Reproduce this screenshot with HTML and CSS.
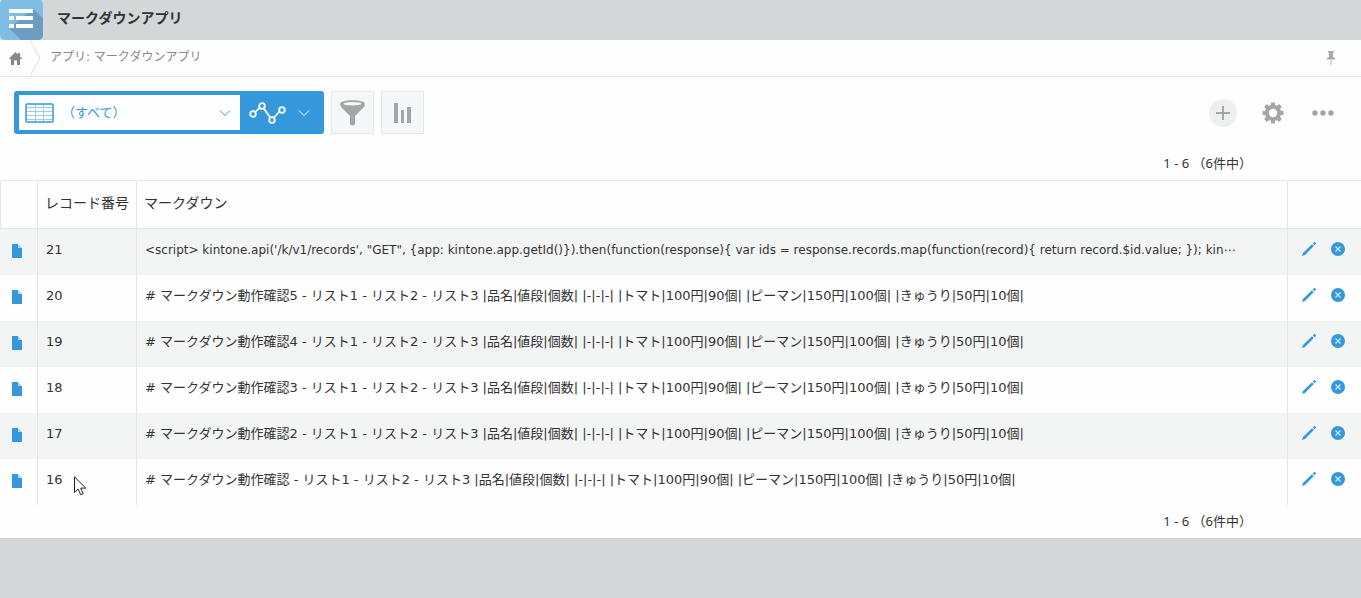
FILE: index.html
```html
<!DOCTYPE html>
<html lang="ja">
<head>
    <meta charset="UTF-8">
    <title>マークダウンアプリ</title>
    <link rel="stylesheet" href="styles.css">
</head>
<body>
    <svg class="symbols" width="0" height="0">
        <symbol id="file" viewBox="0 0 10 14">
            <path fill="#3498db" d="M0 0h6v4h4v10H0z"/>
            <path fill="#a4d1ef" d="M6 0l4 4H7L6 3z"/>
        </symbol>
        <symbol id="pencil" viewBox="0 0 14 14">
            <path fill="#3498db" d="M0 14l1-3L10 2.200l1.800 1.800L3 13z"/>
            <path fill="#3498db" d="M10.800 1.400L12.200 0h.6L14 1.200v.6l-1.400 1.400z"/>
        </symbol>
        <symbol id="remove" viewBox="0 0 14 14">
            <circle cx="7" cy="7" r="7" fill="#3498db"/>
            <path d="M4.500 4.500l5 5M9.500 4.500l-5 5" stroke="#d6eaf8" stroke-width="1.200"/>
        </symbol>
        <symbol id="chevron" viewBox="0 0 12 8">
            <path d="M1 1.500l5 5 5-5" fill="none" stroke="currentColor"/>
        </symbol>
    </svg>

    <div class="header">
        <svg class="app-icon" width="43" height="40" viewBox="0 0 43 40">
            <path fill="#7fbde4" d="M2 0h39q2 2 2 5v29q0 6-6 6H6q-6 0-6-6V3q1-2 2-3z"/>
            <path fill="#6c9dc0" d="M33 9l10 9v16q0 6-6 6H21L9 28z"/>
            <path fill="#fff" d="M9 9h24v4H9zM9 16h5v4H9zM16 16h17v4H16zM9 24h5v4H9zM16 24h17v4H16z"/>
        </svg>
        <h1>マークダウンアプリ</h1>
    </div>

    <div class="content">
        <div class="breadcrumb">
            <a class="home" href="#" aria-label="ホーム">
                <svg width="13" height="13" viewBox="0 0 13 13">
                    <path fill="#8d8688" d="M6.500 0L9 2.500V1h2v3.500L13 6.500l-.8 1L11 6.500V13H8V8.500H5V13H2V6.500L.8 7.500 0 6.500z"/>
                </svg>
            </a>
            <svg class="divider" width="12" height="36" viewBox="0 0 12 36">
                <path d="M0 0l10 18L0 36" fill="none" stroke="#dde1e2"/>
            </svg>
            <a class="crumb" href="#">アプリ: マークダウンアプリ</a>
            <button class="pin" aria-label="固定">
                <svg width="8" height="14" viewBox="0 0 8 14">
                    <path fill="#aaa" d="M1 0h6v1.500H6V6l2 1v1.500H0V7l2-1V1.500H1z"/>
                    <path fill="#b3bfc6" d="M3.500 8.500h1V14h-1z"/>
                </svg>
            </button>
        </div>

        <div class="toolbar">
            <div class="view-group">
                <div class="view-select">
                    <svg width="29" height="20" viewBox="0 0 29 20">
                        <path d="M1 4.500h27M1 8.500h27M1 12.500h27M1 16.500h27M10.500 1v18M18.500 1v18" stroke="#9accec"/>
                        <rect x="1" y="1" width="27" height="18" rx="1" fill="none" stroke="#3498db" stroke-width="1.500"/>
                    </svg>
                    <select aria-label="一覧">
                        <option>（すべて）</option>
                    </select>
                    <svg class="arrow" width="12" height="8"><use href="#chevron"/></svg>
                </div>
                <button class="graph-button" aria-label="グラフ">
                    <svg width="37" height="22" viewBox="0 0 37 22" fill="none" stroke="#fff" stroke-width="1.800">
                        <path d="M6 10.200l5-4.500M14.500 6l7 10M24.500 16l6.500-7"/>
                        <circle cx="4" cy="12" r="2.800"/>
                        <circle cx="13" cy="4" r="2.800"/>
                        <circle cx="23" cy="18" r="2.800"/>
                        <circle cx="33" cy="8" r="2.800"/>
                    </svg>
                    <svg width="12" height="8"><use href="#chevron"/></svg>
                </button>
            </div>
            <button class="tool-button" aria-label="絞り込む">
                <svg width="25" height="26" viewBox="0 0 25 26">
                    <path fill="#a5a5a5" d="M0 4C0-1 25-1 25 4c0 2-1 3-2.500 4.500L15 16v8.500q-2.500 2-5 0V16L2.500 8.500Q0 6 0 4z"/>
                    <ellipse cx="12.500" cy="3.800" rx="9" ry="1.700" fill="#f5f8f9"/>
                </svg>
            </button>
            <button class="tool-button" aria-label="集計する">
                <svg width="17" height="20" viewBox="0 0 17 20">
                    <path fill="#a5a5a5" d="M0 0h4v20H0zM7 7h3v13H7zM13 4h4v16h-4z"/>
                </svg>
            </button>
            <div class="actions">
                <button class="add-button" aria-label="追加">
                    <svg width="14" height="14" viewBox="0 0 14 14">
                        <path d="M7 0v14M0 7h14" stroke="#a5a5a5" stroke-width="2"/>
                    </svg>
                </button>
                <button aria-label="設定">
                    <svg width="22" height="22" viewBox="-11 -11 22 22">
                        <path stroke="#a5a5a5" stroke-width="4" d="M0-10.500v5M0 10.500v-5M-10.500 0h5M10.500 0h-5M-7.500-7.500l3 3M7.500 7.500l-3-3M-7.500 7.500l3-3M7.500-7.500l-3 3"/>
                        <circle r="6.200" fill="none" stroke="#a5a5a5" stroke-width="4"/>
                    </svg>
                </button>
                <button aria-label="その他">
                    <svg width="22" height="6" viewBox="0 0 22 6" fill="#a5a5a5">
                        <circle cx="3" cy="3" r="2.700"/>
                        <circle cx="11" cy="3" r="2.700"/>
                        <circle cx="19" cy="3" r="2.700"/>
                    </svg>
                </button>
            </div>
        </div>

        <div class="pager pager-top">1 - 6 （6件中）</div>

        <table class="records">
            <thead>
                <tr>
                    <th class="col-file"></th>
                    <th class="col-number">レコード番号</th>
                    <th>マークダウン</th>
                    <th class="col-action"></th>
                </tr>
            </thead>
            <tbody>
                <tr>
                    <td class="file"><a href="#" aria-label="詳細"><svg width="10" height="14"><use href="#file"/></svg></a></td>
                    <td>21</td>
                    <td class="text script">&lt;script&gt; kintone.api('/k/v1/records', "GET", {app: kintone.app.getId()}).then(function(response){ var ids = response.records.map(function(record){ return record.$id.value; }); kin⋯</td>
                    <td class="action"><div class="buttons"><button aria-label="編集"><svg width="14" height="14"><use href="#pencil"/></svg></button><button aria-label="削除"><svg width="14" height="14"><use href="#remove"/></svg></button></div></td>
                </tr>
                <tr>
                    <td class="file"><a href="#" aria-label="詳細"><svg width="10" height="14"><use href="#file"/></svg></a></td>
                    <td>20</td>
                    <td class="text"># マークダウン動作確認5 - リスト1 - リスト2 - リスト3 |品名|値段|個数| |-|-|-| |トマト|100円|90個| |ピーマン|150円|100個| |きゅうり|50円|10個|</td>
                    <td class="action"><div class="buttons"><button aria-label="編集"><svg width="14" height="14"><use href="#pencil"/></svg></button><button aria-label="削除"><svg width="14" height="14"><use href="#remove"/></svg></button></div></td>
                </tr>
                <tr>
                    <td class="file"><a href="#" aria-label="詳細"><svg width="10" height="14"><use href="#file"/></svg></a></td>
                    <td>19</td>
                    <td class="text"># マークダウン動作確認4 - リスト1 - リスト2 - リスト3 |品名|値段|個数| |-|-|-| |トマト|100円|90個| |ピーマン|150円|100個| |きゅうり|50円|10個|</td>
                    <td class="action"><div class="buttons"><button aria-label="編集"><svg width="14" height="14"><use href="#pencil"/></svg></button><button aria-label="削除"><svg width="14" height="14"><use href="#remove"/></svg></button></div></td>
                </tr>
                <tr>
                    <td class="file"><a href="#" aria-label="詳細"><svg width="10" height="14"><use href="#file"/></svg></a></td>
                    <td>18</td>
                    <td class="text"># マークダウン動作確認3 - リスト1 - リスト2 - リスト3 |品名|値段|個数| |-|-|-| |トマト|100円|90個| |ピーマン|150円|100個| |きゅうり|50円|10個|</td>
                    <td class="action"><div class="buttons"><button aria-label="編集"><svg width="14" height="14"><use href="#pencil"/></svg></button><button aria-label="削除"><svg width="14" height="14"><use href="#remove"/></svg></button></div></td>
                </tr>
                <tr>
                    <td class="file"><a href="#" aria-label="詳細"><svg width="10" height="14"><use href="#file"/></svg></a></td>
                    <td>17</td>
                    <td class="text"># マークダウン動作確認2 - リスト1 - リスト2 - リスト3 |品名|値段|個数| |-|-|-| |トマト|100円|90個| |ピーマン|150円|100個| |きゅうり|50円|10個|</td>
                    <td class="action"><div class="buttons"><button aria-label="編集"><svg width="14" height="14"><use href="#pencil"/></svg></button><button aria-label="削除"><svg width="14" height="14"><use href="#remove"/></svg></button></div></td>
                </tr>
                <tr>
                    <td class="file"><a href="#" aria-label="詳細"><svg width="10" height="14"><use href="#file"/></svg></a></td>
                    <td>16</td>
                    <td class="text"># マークダウン動作確認 - リスト1 - リスト2 - リスト3 |品名|値段|個数| |-|-|-| |トマト|100円|90個| |ピーマン|150円|100個| |きゅうり|50円|10個|</td>
                    <td class="action"><div class="buttons"><button aria-label="編集"><svg width="14" height="14"><use href="#pencil"/></svg></button><button aria-label="削除"><svg width="14" height="14"><use href="#remove"/></svg></button></div></td>
                </tr>
            </tbody>
        </table>

        <div class="pager">1 - 6 （6件中）</div>
    </div>

    <svg class="cursor" width="13" height="20" viewBox="0 0 13 20">
        <path d="M.5.8v15.700l3.700-3.500 2.500 5.700 2.500-1.100-2.500-5.500h5z" fill="#fff" stroke="#223"/>
    </svg>
</body>
</html>
```

FILE: styles.css
```css
* {
    box-sizing: border-box;
}
body {
    margin: 0;
    background-color: #d3d7d7;
    color: #333;
    font-family: "DejaVu Sans", "Noto Sans CJK JP", sans-serif;
    font-size: 13px;
    line-height: 20px;
}
svg {
    display: block;
    flex: none;
}
button {
    display: flex;
    align-items: center;
    justify-content: center;
    margin: 0;
    padding: 0;
    border: none;
    background: none;
    cursor: pointer;
}
.symbols {
    position: absolute;
}
.header {
    display: flex;
    height: 40px;
}
.header h1 {
    margin: 0;
    padding: 8px 14px;
    font-size: 14px;
    font-weight: bold;
}
.content {
    background-color: #fefefe;
}
.breadcrumb {
    display: flex;
    align-items: center;
    height: 37px;
    padding-right: 26px;
    border-bottom: 1px solid #e3e7e8;
}
.home {
    padding: 0 8px 0 9px;
}
.crumb {
    flex: 1;
    padding: 0 8px 2px;
    color: #888;
    font-size: 12px;
    text-decoration: none;
}
.toolbar {
    display: flex;
    gap: 7px;
    padding: 14px 24px 0 14px;
}
.view-group {
    display: flex;
    width: 310px;
    height: 43px;
    padding: 4px 0 4px 5px;
    border-radius: 3px;
    background-color: #3498db;
}
.view-select {
    display: flex;
    align-items: center;
    width: 221px;
    padding: 0 9px 0 6px;
    background-color: #fefefe;
    color: #3498db;
}
.view-select select {
    flex: 1;
    height: 32px;
    padding: 0 8px 2px;
    border: none;
    background: none;
    color: #3498db;
    font-family: "Noto Sans", "Noto Sans CJK JP", sans-serif;
    font-size: 13px;
    appearance: none;
}
.graph-button {
    flex: 1;
    gap: 12px;
    padding-right: 6px;
    color: #fff;
}
.tool-button {
    width: 43px;
    height: 43px;
    border: 1px solid #e3e7e8;
    background-color: #f5f8f9;
}
.actions {
    display: flex;
    align-items: center;
    gap: 22px;
    margin-left: auto;
}
.actions button {
    width: 28px;
    height: 28px;
}
.actions .add-button {
    border-radius: 50%;
    background-color: #eef0f0;
}
.pager {
    padding: 6px 109px 7px;
    font-family: "Noto Sans", "Noto Sans CJK JP", sans-serif;
    text-align: right;
}
.pager-top {
    padding-top: 19px;
}
.records {
    width: 100%;
    border-collapse: separate;
    border-spacing: 0;
    table-layout: fixed;
}
.records th {
    height: 49px;
    padding: 0 7px 4px;
    border: 1px solid #e3e7e8;
    border-right: none;
    font-size: 14px;
    font-weight: normal;
    text-align: left;
    white-space: nowrap;
}
.records td {
    height: 46px;
    padding: 0 8px 4px;
    border-left: 1px solid #e3e7e8;
}
.records tbody tr:nth-child(odd) {
    background-color: #f3f5f5;
}
.col-file {
    width: 37px;
}
.col-number {
    width: 99px;
}
.col-action {
    width: 74px;
}
.records .file {
    padding: 0 12px 2px;
    border-left: none;
}
.records .text {
    overflow: hidden;
    white-space: nowrap;
    text-overflow: ellipsis;
}
.records .script {
    font-size: 12px;
}
.records .action {
    padding: 0 14px 6px;
}
.buttons {
    display: flex;
    gap: 15px;
}
.cursor {
    position: absolute;
    top: 476px;
    left: 74px;
}
```
